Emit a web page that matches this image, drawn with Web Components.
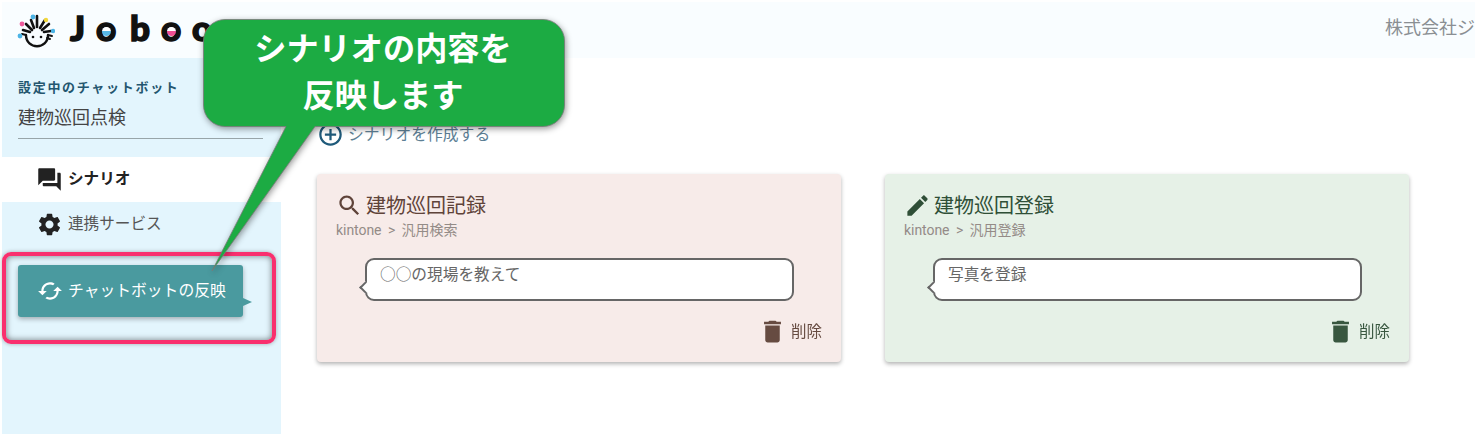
<!DOCTYPE html>
<html lang="ja">
<head>
<meta charset="utf-8">
<title>Joboco</title>
<style>
html, body { margin: 0; height: 100%; background: #fff; overflow: hidden; }
body { font-family: "Noto Sans CJK JP", "Noto Sans", sans-serif; }
</style>
</head>
<body>
<app-page>
  <app-header slot="header"></app-header>
  <side-panel slot="side" botname="建物巡回点検">
    <nav-item icon="forum" active>シナリオ</nav-item>
    <nav-item icon="settings">連携サービス</nav-item>
    <sync-button>チャットボットの反映</sync-button>
  </side-panel>
  <scenario-list slot="main">
    <scenario-card icon="search" tone="red" name="建物巡回記録" path="kintone > 汎用検索" phrase="○○の現場を教えて"></scenario-card>
    <scenario-card icon="edit" tone="green" name="建物巡回登録" path="kintone > 汎用登録" phrase="写真を登録"></scenario-card>
  </scenario-list>
  <mark-box slot="over"></mark-box>
  <callout-note slot="over">シナリオの内容を<br>反映します</callout-note>
</app-page>

<script>
// Material icon paths, all on a 24 box
const ICONS = {
  forum: 'M21 6h-2v9H6v2c0 .55.45 1 1 1h11l4 4V7c0-.55-.45-1-1-1zm-4 6V3c0-.55-.45-1-1-1H3c-.55 0-1 .45-1 1v14l4-4h10c.55 0 1-.45 1-1z',
  settings: 'M19.14 12.94c.04-.3.06-.61.06-.94 0-.32-.02-.64-.07-.94l2.03-1.58c.18-.14.23-.41.12-.61l-1.92-3.32c-.12-.22-.37-.29-.59-.22l-2.39.96c-.5-.38-1.03-.7-1.62-.94l-.36-2.54c-.04-.24-.24-.41-.48-.41h-3.84c-.24 0-.43.17-.47.41l-.36 2.54c-.59.24-1.13.57-1.62.94l-2.39-.96c-.22-.08-.47 0-.59.22L2.74 8.87c-.12.21-.08.47.12.61l2.03 1.58c-.05.3-.09.63-.09.94s.02.64.07.94l-2.03 1.58c-.18.14-.23.41-.12.61l1.92 3.32c.12.22.37.29.59.22l2.39-.96c.5.38 1.03.7 1.62.94l.36 2.54c.05.24.24.41.48.41h3.84c.24 0 .44-.17.47-.41l.36-2.54c.59-.24 1.13-.56 1.62-.94l2.39.96c.22.08.47 0 .59-.22l1.92-3.32c.12-.22.07-.47-.12-.61l-2.01-1.58zM12 15.6c-1.98 0-3.6-1.62-3.6-3.6s1.62-3.6 3.6-3.6 3.6 1.62 3.6 3.6-1.62 3.6-3.6 3.6z',
  cached: 'M19 8l-4 4h3c0 3.31-2.69 6-6 6-1.01 0-1.97-.25-2.8-.7l-1.46 1.46C8.97 19.54 10.43 20 12 20c4.42 0 8-3.58 8-8h3l-4-4zM6 12c0-3.31 2.69-6 6-6 1.01 0 1.97.25 2.8.7l1.46-1.46C15.03 4.46 13.57 4 12 4c-4.42 0-8 3.58-8 8H1l4 4 4-4H6z',
  search: 'M15.5 14h-.79l-.28-.27C15.41 12.59 16 11.11 16 9.5 16 5.91 13.09 3 9.5 3S3 5.91 3 9.5 5.91 16 9.5 16c1.61 0 3.09-.59 4.23-1.57l.27.28v.79l5 4.99L20.49 19l-4.99-5zm-6 0C7.01 14 5 11.99 5 9.5S7.01 5 9.5 5 14 7.01 14 9.5 11.99 14 9.5 14z',
  edit: 'M3 17.25V21h3.75L17.81 9.94l-3.75-3.75L3 17.25zM20.71 7.04c.39-.39.39-1.02 0-1.41l-2.34-2.34c-.39-.39-1.02-.39-1.41 0l-1.83 1.83 3.75 3.75 1.83-1.83z',
  trash: 'M6 19c0 1.1.9 2 2 2h8c1.1 0 2-.9 2-2V7H6v12zM19 4h-3.5l-1-1h-5l-1 1H5v2h14V4z',
  add: 'M13 7h-2v4H7v2h4v4h2v-4h4v-2h-4V7zm-1-5C6.48 2 2 6.48 2 12s4.48 10 10 10 10-4.48 10-10S17.52 2 12 2zm0 18c-4.41 0-8-3.59-8-8s3.59-8 8-8 8 3.59 8 8-3.59 8-8 8z'
};

function icon(name, size) {
  return `<svg width="${size}" height="${size}" viewBox="0 0 24 24" fill="currentColor"><path d="${ICONS[name]}"/></svg>`;
}

class AppPage extends HTMLElement {
  connectedCallback() {
    this.attachShadow({mode: 'open'});
    this.shadowRoot.innerHTML = `
<style>
:host { display: block; position: relative; width: 1475px; height: 436px; overflow: hidden; }
.frame { display: flex; flex-direction: column; height: 432px; padding: 2px 0 2px 2px; }
.body { display: flex; flex: 1; min-height: 0; }
</style>
<div class="frame">
  <slot name="header"></slot>
  <div class="body">
    <slot name="side"></slot>
    <slot name="main"></slot>
  </div>
</div>
<slot name="over"></slot>`;
  }
}

class AppHeader extends HTMLElement {
  connectedCallback() {
    this.attachShadow({mode: 'open'});
    this.shadowRoot.innerHTML = `
<style>
:host { display: flex; align-items: center; justify-content: space-between; height: 56px; background: #f9fdff; white-space: nowrap; overflow: hidden; }
.logo { display: flex; align-items: center; padding-left: 15px; }
.word { display: flex; margin: -6px 0 0 15px; font: 900 35px/40px Lato, sans-serif; color: #111; -webkit-text-stroke: 1.5px #111; }
.word span { position: relative; width: 31px; }
.word span:first-child { width: 26px; }
.word span:nth-child(2) { width: 34px; }
/* the counter of each o holds a half filled disc */
.word .o::after { content: ""; position: absolute; left: 6px; top: 20px; width: 9px; height: 9px; border-radius: 50%; background: linear-gradient(#fff 50%, var(--fill) 50%); }
.word .blue { --fill: #58b7e6; }
.word .pink { --fill: #ee4f93; }
.company { font-size: 18px; color: #8a8f93; flex: none; padding-bottom: 8px; }
</style>
<div class="logo">
  <svg width="38" height="38" viewBox="0 0 38 38" fill="none" stroke="#111" stroke-linecap="round">
    <g stroke-width="2.6">
      <path d="M15 19 9 13M17 17 14 9M20 16 20 5M23 17 28 9M25 19 32 13M13 21 6 19M27 21 34 20"/>
    </g>
    <path d="M9 24c0 15 22 15 22 0" stroke-width="2.4"/>
    <path d="M9 24 5 23M31 24 35 25M33 28 30 27" stroke-width="2"/>
    <circle cx="16" cy="26" r="1.3" fill="#111" stroke="none"/>
    <circle cx="24" cy="26" r="1.3" fill="#111" stroke="none"/>
    <g stroke="none">
      <circle cx="5" cy="13" r="2.4" fill="#ee5b9c"/>
      <circle cx="16" cy="6" r="2.4" fill="#4cb4e6"/>
      <circle cx="29" cy="9" r="2.2" fill="#f2d83c"/>
      <circle cx="36" cy="20" r="2.2" fill="#4cb4e6"/>
      <circle cx="3" cy="25" r="2.4" fill="#4cb4e6"/>
    </g>
  </svg>
  <div class="word"><span>J</span><span class="o blue">o</span><span>b</span><span class="o pink">o</span><span>o</span></div>
</div>
<div class="company">株式会社ジ</div>`;
  }
}

class SidePanel extends HTMLElement {
  connectedCallback() {
    const name = this.getAttribute('botname');
    this.attachShadow({mode: 'open'});
    this.shadowRoot.innerHTML = `
<style>
:host { display: block; width: 279px; background: #e3f5fd; flex: none; }
.bot { padding: 20px 18px 0 16px; height: 79px; }
.label { font-size: 13px; line-height: 18px; font-weight: 700; color: #23566f; letter-spacing: 1.7px; white-space: nowrap; }
.name { font-size: 18px; line-height: 26px; color: #444; margin-top: 7px; padding-bottom: 9px; border-bottom: 1px solid #98a5a9; }
</style>
<div class="bot">
  <div class="label">設定中のチャットボット</div>
  <div class="name">${name}</div>
</div>
<slot></slot>`;
  }
}

class NavItem extends HTMLElement {
  connectedCallback() {
    this.attachShadow({mode: 'open'});
    this.shadowRoot.innerHTML = `
<style>
:host { display: flex; align-items: center; height: 45px; padding-left: 34px; gap: 5px; font-size: 15.6px; color: #555; }
:host([active]) { background: #fff; color: #222; font-weight: 700; }
svg { color: #222; flex: none; }
slot { display: block; padding-bottom: 6px; }
</style>
${icon(this.getAttribute('icon'), 27)}<slot></slot>`;
  }
}

class SyncButton extends HTMLElement {
  connectedCallback() {
    this.attachShadow({mode: 'open'});
    this.shadowRoot.innerHTML = `
<style>
:host { display: flex; position: relative; align-items: center; gap: 5px; width: 225px; height: 52px; box-sizing: border-box; margin: 18px 0 0 16px; padding-left: 19px; background: #4a9a9f; border-radius: 3px; color: #fff; font-size: 15.8px; box-shadow: 0 2px 5px rgba(0,0,0,.3); white-space: nowrap; }
:host::after { content: ""; position: absolute; left: 100%; top: 33px; border-left: 9px solid #4a9a9f; border-top: 4px solid transparent; border-bottom: 4px solid transparent; }
svg { flex: none; }
slot { display: block; padding-bottom: 4px; }
</style>
${icon('cached', 26)}<slot></slot>`;
  }
}

class ScenarioList extends HTMLElement {
  connectedCallback() {
    this.attachShadow({mode: 'open'});
    this.shadowRoot.innerHTML = `
<style>
:host { display: block; flex: 1; padding: 61px 0 0 36px; }
.create { display: flex; align-items: center; gap: 4px; height: 28px; color: #5d7f95; font-size: 15.8px; margin-left: 1px; }
.create svg { color: #1f5a7a; margin-left: -1px; margin-top: 2px; }
.cards { display: flex; gap: 44px; margin-top: 27px; }
</style>
<div class="create">${icon('add', 27)}シナリオを作成する</div>
<div class="cards"><slot></slot></div>`;
  }
}

class ScenarioCard extends HTMLElement {
  connectedCallback() {
    const green = this.getAttribute('tone') === 'green';
    this.attachShadow({mode: 'open'});
    this.shadowRoot.innerHTML = `
<style>
:host { display: block; box-sizing: border-box; width: 524px; height: 188px; padding: 17px 19px 0; border-radius: 4px; background: ${green ? '#e6f1e7' : '#f7ebe9'}; color: ${green ? '#2f4f37' : '#5f4339'}; box-shadow: 0 2px 4px rgba(0,0,0,.3); }
.title { display: flex; align-items: center; gap: 3px; font-size: 20px; line-height: 28px; }
.title svg { flex: none; }
.path { font: 14px/18px Roboto, "Noto Sans CJK JP", sans-serif; color: #948b87; margin-top: 2px; word-spacing: 3px; letter-spacing: -.05px; }
.foot { display: flex; justify-content: flex-end; align-items: center; gap: 4px; margin-top: 16px; font-size: 15.5px; opacity: .95; }
.foot span { padding-bottom: 3px; }
</style>
<div class="title">${icon(this.getAttribute('icon'), 27)}${this.getAttribute('name')}</div>
<div class="path">${this.getAttribute('path').replace('>', '&gt;')}</div>
<speech-bubble>${this.getAttribute('phrase')}</speech-bubble>
<div class="foot">${icon('trash', 29)}<span>削除</span></div>`;
  }
}

class SpeechBubble extends HTMLElement {
  connectedCallback() {
    this.attachShadow({mode: 'open'});
    this.shadowRoot.innerHTML = `
<style>
:host { display: block; position: relative; box-sizing: border-box; width: 429px; height: 43px; margin: 19px 0 0 29px; padding: 2px 13px; background: #fff; border: 2px solid #666; border-radius: 9px; font-size: 15.7px; line-height: 24px; color: #666; }
:host::before { content: ""; position: absolute; left: -6px; top: 23px; width: 7px; height: 7px; background: #fff; border-left: 2px solid #666; border-bottom: 2px solid #666; transform: rotate(45deg); }
</style>
<slot></slot>`;
  }
}

class MarkBox extends HTMLElement {
  connectedCallback() {
    this.attachShadow({mode: 'open'});
    this.shadowRoot.innerHTML = `
<style>
:host { display: block; position: absolute; left: 2px; top: 252px; width: 274px; height: 92px; box-sizing: border-box; border: 4px solid #f92f6e; border-radius: 9px; box-shadow: 0 0 4px rgba(0,0,0,.3), inset 0 0 6px rgba(0,0,0,.5); }
</style>`;
  }
}

class CalloutNote extends HTMLElement {
  connectedCallback() {
    this.attachShadow({mode: 'open'});
    this.shadowRoot.innerHTML = `
<style>
:host { display: block; position: absolute; left: 203px; top: 19px; width: 362px; height: 108px; }
svg { position: absolute; left: 0; top: 0; overflow: visible; filter: drop-shadow(1px 2px 3px rgba(0,0,0,.4)); }
.text { position: relative; text-align: center; color: #fff; font-size: 32.2px; font-weight: 700; line-height: 47px; padding: 4px 2px 0 0; white-space: nowrap; }
</style>
<svg width="362" height="252" viewBox="0 0 362 252">
  <path d="M22 0.5H340A21.5 21.5 0 0 1 361.5 22V86A21.5 21.5 0 0 1 340 107.5H112L9 252L83 107.5H22A21.5 21.5 0 0 1 .5 86V22A21.5 21.5 0 0 1 22 .5Z" fill="#1cab43" stroke="#7a7a7a" stroke-width=".8"/>
</svg>
<div class="text"><slot></slot></div>`;
  }
}

customElements.define('app-page', AppPage);
customElements.define('app-header', AppHeader);
customElements.define('side-panel', SidePanel);
customElements.define('nav-item', NavItem);
customElements.define('sync-button', SyncButton);
customElements.define('scenario-list', ScenarioList);
customElements.define('scenario-card', ScenarioCard);
customElements.define('speech-bubble', SpeechBubble);
customElements.define('mark-box', MarkBox);
customElements.define('callout-note', CalloutNote);
</script>
</body>
</html>
